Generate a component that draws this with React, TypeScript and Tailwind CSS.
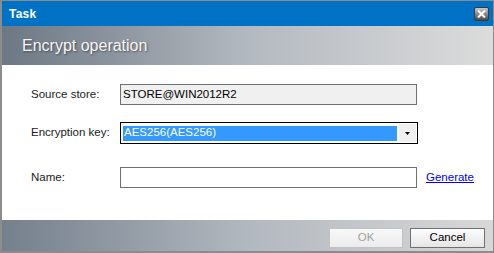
export default function App() {
  return (
    <div className="w-[494px] h-[253px] flex flex-col bg-white border border-[#8c8c8c] border-l-2 border-b-2 font-['Liberation_Sans',Arial,sans-serif] overflow-hidden">
      {/* title bar */}
      <div className="h-[25px] shrink-0 bg-[#0072c6] flex items-center justify-between pl-[7px] pr-[4px]">
        <span className="text-white text-[12px] font-bold tracking-[0.2px]">Task</span>
        <div className="w-[15px] h-[14px] rounded-[2px] border border-[#3a3a3a] bg-gradient-to-b from-[#c8c8c8] via-[#8a8a8a] to-[#4a4a4a] flex items-center justify-center">
          <svg width="9" height="8" viewBox="0 0 9 8">
            <path d="M1 0.5 L8 7.5 M8 0.5 L1 7.5" stroke="white" strokeWidth="2" />
          </svg>
        </div>
      </div>

      {/* header band */}
      <div className="h-[39px] shrink-0 bg-gradient-to-r from-[#6d7884] via-[#b3b9c0] to-[#dcdcdc] flex items-center pl-[20px]">
        <span className="text-[#f6f6f6] text-[16px] [text-shadow:1px_1px_2px_rgba(0,0,0,0.45)]">Encrypt operation</span>
      </div>

      {/* body */}
      <div className="flex-1 flex flex-col pt-[19px] pl-[29px] text-[11.5px] text-[#1a1a1a]">
        <div className="flex items-center h-[21px]">
          <span className="w-[89px]">Source store:</span>
          <div className="w-[297px] h-[21px] bg-[#f0f0f0] border border-[#707070] flex items-center pl-[2px] text-black">
            STORE@WIN2012R2
          </div>
        </div>

        <div className="flex items-center h-[22px] mt-[17px]">
          <span className="w-[89px]">Encryption key:</span>
          <div className="w-[298px] h-[22px] border border-black bg-white flex items-center pl-[2px] pr-[1px]">
            <div className="w-[274px] h-[15px] bg-[#3399ff] text-white flex items-center pl-[1px]">AES256(AES256)</div>
            <div className="ml-auto w-[17px] h-[18px] bg-[#f0f0f0] flex items-center justify-center">
              <svg width="5" height="3" viewBox="0 0 5 3">
                <path d="M0 0 H5 L2.5 3 Z" fill="black" />
              </svg>
            </div>
          </div>
        </div>

        <div className="flex items-center h-[21px] mt-[23px]">
          <span className="w-[89px]">Name:</span>
          <div className="w-[297px] h-[21px] bg-white border border-[#707070]" />
          <a className="ml-[9px] text-[#0000ff] underline">Generate</a>
        </div>
      </div>

      {/* footer */}
      <div className="h-[31px] shrink-0 bg-gradient-to-r from-[#75808d] via-[#b2b8bf] to-[#d8d8d8] flex items-center justify-end gap-[7px] pr-[8px] pt-[5px] text-[11.5px]">
        <button className="w-[74px] h-[20px] border border-[#c2c2c2] bg-gradient-to-b from-[#f8f8f8] to-[#ececec] text-[#a0a0a0]">
          OK
        </button>
        <button className="w-[75px] h-[20px] border border-[#707070] bg-gradient-to-b from-[#fdfdfd] to-[#e6e6e6] text-black">
          Cancel
        </button>
      </div>
    </div>
  );
}
